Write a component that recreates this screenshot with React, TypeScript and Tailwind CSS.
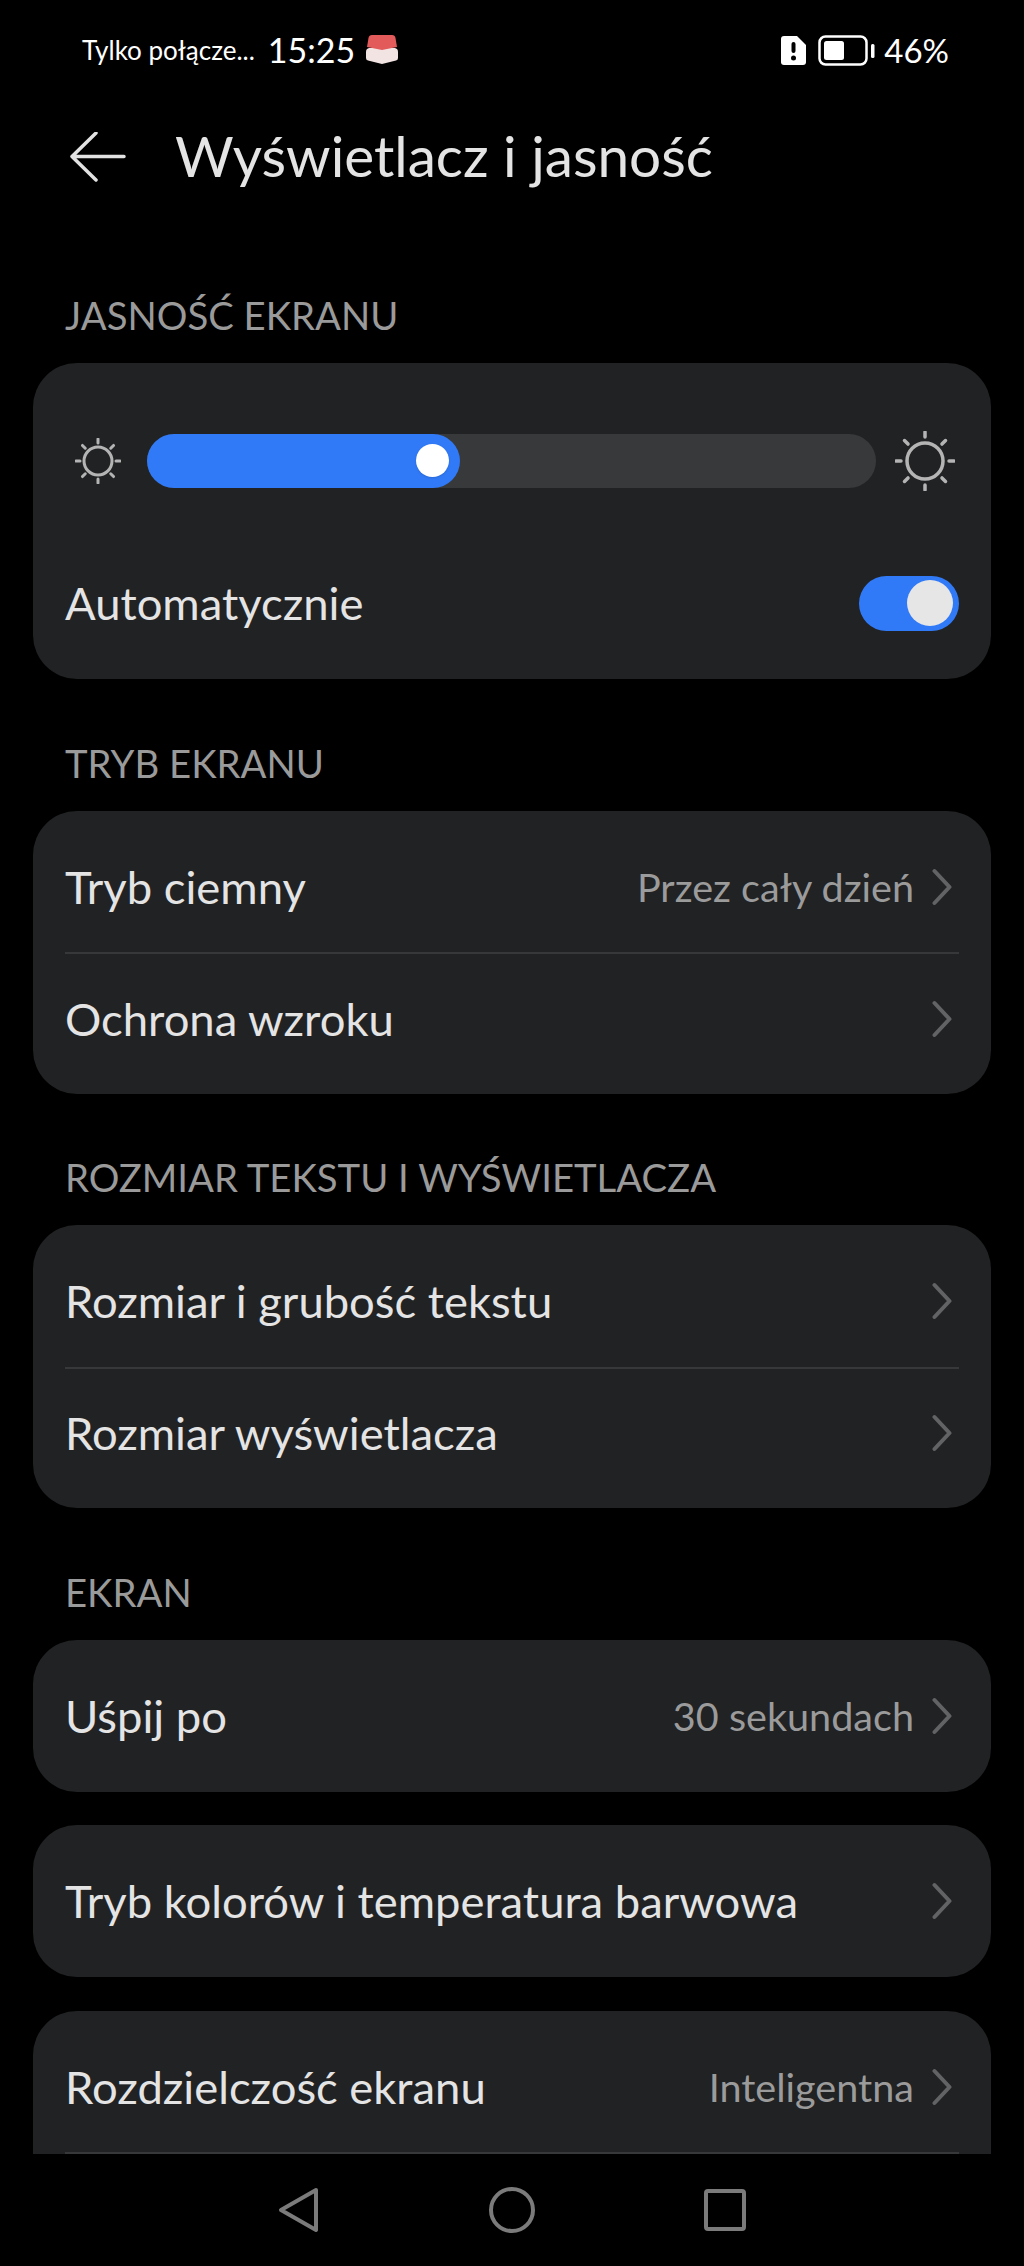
const font = { fontFamily: 'Lato, "Noto Sans", sans-serif' };

function Chevron() {
  return (
    <svg width="20" height="38" viewBox="0 0 20 38" fill="none" className="ml-[18px] mr-[7px] shrink-0">
      <path d="M2.500 3L17.500 19L2.500 35" stroke="#626365" strokeWidth="4" strokeLinecap="round" strokeLinejoin="round" />
    </svg>
  );
}

function Sun({ size, r, inner, outer, sw }: { size: number; r: number; inner: number; outer: number; sw: number }) {
  const c = size / 2;
  const rays = [0, 45, 90, 135, 180, 225, 270, 315];
  return (
    <svg width={size} height={size} viewBox={`0 0 ${size} ${size}`} fill="none" stroke="#b4b4b4" strokeWidth={sw} strokeLinecap="round">
      <circle cx={c} cy={c} r={r} />
      {rays.map((a) => {
        const t = (a * Math.PI) / 180;
        return (
          <line
            key={a}
            x1={c + Math.cos(t) * inner}
            y1={c + Math.sin(t) * inner}
            x2={c + Math.cos(t) * outer}
            y2={c + Math.sin(t) * outer}
          />
        );
      })}
    </svg>
  );
}

// divider rows are 2px taller, the row under them gives it back (tail)
function Row({ label, value, divider, tail }: { label: string; value?: string; divider?: boolean; tail?: boolean }) {
  return (
    <div
      className={`flex shrink-0 items-center ${divider ? 'h-[133px] border-b-2 border-[#37383a]' : tail ? 'h-[129px]' : 'h-[131px]'}`}
    >
      <span className="flex-1 text-[45.400px] leading-[56px] text-[#e4e4e4]">{label}</span>
      {value && <span className="text-[39.600px] leading-[50px] text-[#9b9b9b]">{value}</span>}
      <Chevron />
    </div>
  );
}

function Heading({ children }: { children: string }) {
  return (
    <div className="flex h-[131.500px] items-end px-[65px] pb-[27px] text-[38.300px] leading-[42px] text-[#9a9a9a]">
      {children}
    </div>
  );
}

function Card({ children }: { children: React.ReactNode }) {
  return <div className="mx-[33px] rounded-[44px] bg-[#212224] px-[32px] py-[10.500px]">{children}</div>;
}

function StatusBar() {
  return (
    <div className="flex h-[100px] items-center justify-between pl-[82px] pr-[75px] text-white">
      <div className="flex items-center">
        <span className="text-[26px] leading-[36px]">Tylko połącze...</span>
        <span className="ml-[13px] text-[34px] leading-[44px]">15:25</span>
        <svg width="34" height="30" viewBox="0 0 34 30" className="ml-[10px]">
          <path d="M4 13H30L32 14Q33 15 33 17V23Q33 25 31 25.500L17 29L3 25.500Q1 25 1 23V17Q1 15 2 14Z" fill="#f3e4e4" />
          <path d="M7 0H27Q30 0 30.500 3L32 12L17 15L2 12L3.500 3Q4 0 7 0Z" fill="#e25a5a" />
        </svg>
      </div>
      <div className="flex items-center">
        <svg width="25" height="29" viewBox="0 0 25 29">
          <path d="M3 0H16L25 9V26Q25 29 22 29H3Q0 29 0 26V3Q0 0 3 0Z" fill="#fff" />
          <rect x="10.500" y="6" width="4" height="11" rx="2" fill="#000" />
          <circle cx="12.500" cy="22" r="2.500" fill="#000" />
        </svg>
        <svg width="57" height="31" viewBox="0 0 57 31" fill="none" className="ml-[12px]">
          <rect x="1.500" y="1.500" width="47" height="28" rx="6" stroke="#fff" strokeWidth="2.500" />
          <rect x="6" y="6" width="20" height="19" rx="2.500" fill="#fff" />
          <rect x="53" y="9" width="3.500" height="14" rx="1.500" fill="#fff" />
        </svg>
        <span className="ml-[9px] text-[33px] leading-[40px]">46%</span>
      </div>
    </div>
  );
}

function BottomNav() {
  return (
    <div className="flex h-[112px] items-center justify-center gap-[169px] bg-black pb-[1px]">
      <svg width="42" height="46" viewBox="0 0 42 46" fill="none" stroke="#7b7b7b" strokeWidth="4" strokeLinejoin="round">
        <path d="M38 3L3 23L38 43Z" />
      </svg>
      <svg width="46" height="46" viewBox="0 0 46 46" fill="none" stroke="#7b7b7b" strokeWidth="4">
        <circle cx="23" cy="23" r="21" />
      </svg>
      <svg width="42" height="42" viewBox="0 0 42 42" fill="none" stroke="#7b7b7b" strokeWidth="4" strokeLinejoin="round">
        <rect x="2" y="2" width="38" height="38" rx="2" />
      </svg>
    </div>
  );
}

export default function App() {
  return (
    <div className="flex h-[2266px] w-[1024px] flex-col overflow-hidden bg-black" style={font}>
      <StatusBar />

      {/* Title */}
      <div className="flex h-[115px] items-center pl-[68px]">
        <svg width="58" height="52" viewBox="0 0 58 52" fill="none" stroke="#e2e2e2" strokeWidth="3.500" strokeLinecap="round" strokeLinejoin="round">
          <path d="M28 1L4 24.500L28 48M4 24.500H56" />
        </svg>
        <h1 className="mb-[5px] ml-[49px] text-[56.700px] leading-[64px] font-normal text-[#e4e4e4]">Wyświetlacz i jasność</h1>
      </div>

      <div className="min-h-0 flex-1 overflow-hidden">
        <div className="mt-[16.500px]">
          <Heading>JASNOŚĆ EKRANU</Heading>
        </div>

        <Card>
          <div className="flex h-[164px] items-center pt-[10px]">
            <div className="flex w-[82px] shrink-0 items-center pl-[10px]">
              <Sun size={46} r={14} inner={18} outer={22} sw={3} />
            </div>
            <div className="h-[54px] w-[729px] shrink-0 rounded-full bg-[#38393b]">
              <div className="flex h-full w-[313px] items-center justify-end rounded-full bg-[#317af7] pr-[11px]">
                <div className="h-[33px] w-[33px] rounded-full bg-white shadow-sm" />
              </div>
            </div>
            <div className="ml-[19px] flex shrink-0 items-center">
              <Sun size={60} r={18} inner={24} outer={29} sw={3.500} />
            </div>
          </div>
          <div className="flex h-[131px] items-center justify-between">
            <span className="text-[45.400px] leading-[56px] text-[#e4e4e4]">Automatycznie</span>
            <div className="flex h-[55px] w-[100px] items-center justify-end rounded-full bg-[#317af7] pr-[6px]">
              <div className="h-[46px] w-[46px] rounded-full bg-[#e6e6e6]" />
            </div>
          </div>
        </Card>

        <Heading>TRYB EKRANU</Heading>
        <Card>
          <Row label="Tryb ciemny" value="Przez cały dzień" divider />
          <Row label="Ochrona wzroku" tail />
        </Card>

        <Heading>ROZMIAR TEKSTU I WYŚWIETLACZA</Heading>
        <Card>
          <Row label="Rozmiar i grubość tekstu" divider />
          <Row label="Rozmiar wyświetlacza" tail />
        </Card>

        <Heading>EKRAN</Heading>
        <div className="flex flex-col gap-[33.500px]">
          <Card>
            <Row label="Uśpij po" value="30 sekundach" />
          </Card>
          <Card>
            <Row label="Tryb kolorów i temperatura barwowa" />
          </Card>
          {/* this card runs on under the navigation bar */}
          <Card>
            <Row label="Rozdzielczość ekranu" value="Inteligentna" divider />
            <div className="h-[60px]" />
          </Card>
        </div>
      </div>

      <BottomNav />
    </div>
  );
}
